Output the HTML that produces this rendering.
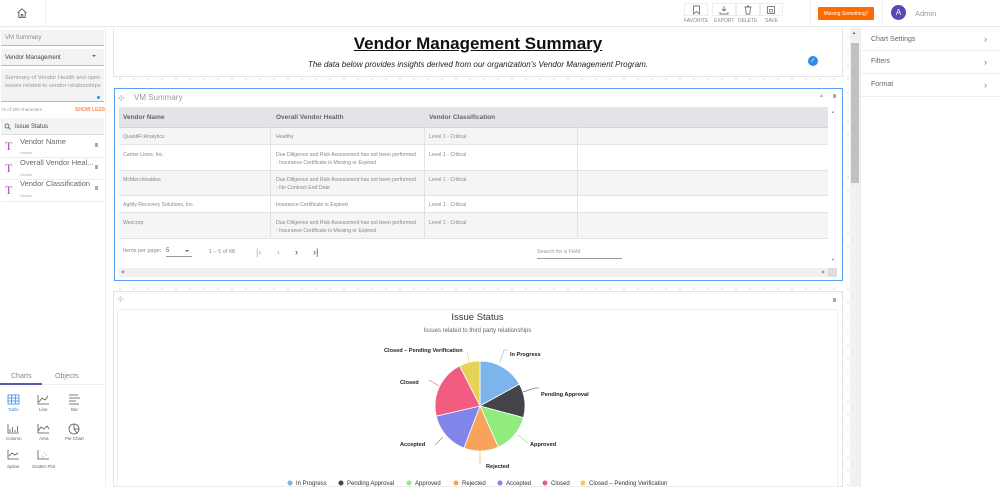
<!DOCTYPE html>
<html><head><meta charset="utf-8"><style>
*{box-sizing:border-box;margin:0;padding:0}
body{width:1000px;height:487px;overflow:hidden;background:#fff;font-family:"Liberation Sans",sans-serif;color:#555;position:relative}
.a{position:absolute}
.t{font-size:6px;color:#777;white-space:nowrap}
.grid{background-image:radial-gradient(circle,#bbb 0.6px,transparent 0.8px);background-size:14px 14px;background-position:3px 3px}
.row{position:absolute;left:119px;width:709px;border-bottom:1px solid #e3e3e3}
.cell{position:absolute;font-size:5.2px;color:#888;line-height:8px;white-space:nowrap}
</style></head><body>
<!-- top bar -->
<div class="a" style="left:0;top:0;width:1000px;height:27px;border-bottom:1px solid #e8e8e8"></div>
<div class="a" style="left:45px;top:0;width:1px;height:27px;background:#eee"></div>
<svg class="a" style="left:16px;top:7px" width="12" height="12" viewBox="0 0 12 12"><path d="M1.5 6L6 1.8 10.5 6M2.8 5v5.5h2.4V7.5h1.6v3h2.4V5" fill="none" stroke="#667" stroke-width="1"/></svg>
<div class="a" style="left:684px;top:3px;width:24px;height:13px;border:1px solid #eee"></div>
<div class="a" style="left:712px;top:3px;width:24px;height:13px;border:1px solid #eee"></div>
<div class="a" style="left:736px;top:3px;width:24px;height:13px;border:1px solid #eee"></div>
<div class="a" style="left:760px;top:3px;width:23px;height:13px;border:1px solid #eee"></div>
<svg class="a" style="left:692px;top:5px" width="9" height="10"><path d="M1.5 1h6v8L4.5 6.5 1.5 9z" fill="none" stroke="#777" stroke-width=".9"/></svg>
<svg class="a" style="left:719px;top:5px" width="10" height="10"><path d="M5 1v5M3 4l2 2 2-2M1 7v2h8V7" fill="none" stroke="#777" stroke-width=".9"/></svg>
<svg class="a" style="left:743px;top:5px" width="10" height="10"><path d="M1.5 2h7M2.5 2l.7 7h3.6l.7-7M4 1h2" fill="none" stroke="#777" stroke-width=".9"/></svg>
<svg class="a" style="left:766px;top:5px" width="10" height="10"><rect x="1.5" y="1.5" width="7" height="7" fill="none" stroke="#777" stroke-width=".9"/><rect x="3.5" y="4.5" width="3" height="2.5" fill="none" stroke="#777" stroke-width=".7"/></svg>
<div class="a t" style="left:684px;top:18px;font-size:5px;color:#888">FAVORITE</div>
<div class="a t" style="left:714px;top:18px;font-size:5px;color:#888">EXPORT</div>
<div class="a t" style="left:738px;top:18px;font-size:5px;color:#888">DELETE</div>
<div class="a t" style="left:765px;top:18px;font-size:5px;color:#888">SAVE</div>
<div class="a" style="left:810px;top:0;width:1px;height:27px;background:#eee"></div>
<div class="a" style="left:818px;top:7px;width:56px;height:13px;background:#ff6a00;border-radius:1px;color:#fff;font-size:5px;display:flex;align-items:center;justify-content:center">Missing Something?</div>
<div class="a" style="left:882px;top:0;width:1px;height:27px;background:#eee"></div>
<div class="a" style="left:891px;top:5px;width:15px;height:15px;border-radius:50%;background:#5a47b5;color:#fff;font-size:8px;line-height:15px;text-align:center">A</div>
<div class="a" style="left:915px;top:9px;font-size:7.5px;color:#999">Admin</div>

<!-- left sidebar -->
<div class="a" style="left:105px;top:27px;width:1px;height:460px;background:#eee"></div>
<div class="a" style="left:1px;top:30px;width:103px;height:16px;background:#f3f3f3;border-bottom:1px solid #bbb"></div>
<div class="a t" style="left:5px;top:35px;font-size:6px;color:#888">VM Summary</div>
<div class="a" style="left:1px;top:49px;width:103px;height:17px;background:#f3f3f3;border-bottom:1px solid #bbb"></div>
<div class="a t" style="left:5px;top:55px;font-size:6px;color:#444">Vendor Management</div>
<div class="a" style="left:92px;top:55px;border-left:2.5px solid transparent;border-right:2.5px solid transparent;border-top:2.5px solid #666"></div>
<div class="a" style="left:1px;top:69px;width:103px;height:33px;background:#f3f3f3;border-bottom:1px solid #bbb"></div>
<div class="a" style="left:5px;top:74px;font-size:5.8px;color:#999;line-height:8px;width:98px">Summary of Vendor Health and open issues related to vendor relationships</div>
<div class="a" style="left:97px;top:96px;width:3px;height:3px;border-radius:50%;background:#2196f3"></div>
<div class="a t" style="left:1px;top:107px;font-size:4.5px;color:#999">72 of 200 characters</div>
<div class="a t" style="left:75px;top:107px;font-size:5px;color:#ff8a50;font-weight:bold">SHOW LESS</div>
<div class="a" style="left:1px;top:118px;width:103px;height:17px;background:#f3f3f3;border-bottom:1px solid #ddd"></div>
<svg class="a" style="left:4px;top:123px" width="7" height="7"><circle cx="3" cy="3" r="2" fill="none" stroke="#555" stroke-width=".8"/><path d="M4.5 4.5L6.5 6.5" stroke="#555" stroke-width=".8"/></svg>
<div class="a t" style="left:15px;top:124px;font-size:6px;color:#444">Issue Status</div>
<div class="a" style="left:1px;top:157px;width:103px;height:1px;background:#eee"></div>
<div class="a" style="left:1px;top:179px;width:103px;height:1px;background:#eee"></div>
<div class="a" style="left:1px;top:201px;width:103px;height:1px;background:#eee"></div>
<div class="a" style="left:5px;top:139px;font-size:12px;color:#b04ab0;font-family:'Liberation Serif',serif">T</div>
<div class="a" style="left:5px;top:161px;font-size:12px;color:#b04ab0;font-family:'Liberation Serif',serif">T</div>
<div class="a" style="left:5px;top:183px;font-size:12px;color:#b04ab0;font-family:'Liberation Serif',serif">T</div>
<div class="a t" style="left:20px;top:137px;font-size:7.5px;color:#666">Vendor Name</div>
<div class="a t" style="left:20px;top:150px;font-size:4px;color:#aaa">Vendor</div>
<div class="a t" style="left:20px;top:158px;font-size:7.5px;color:#666">Overall Vendor Heal...</div>
<div class="a t" style="left:20px;top:172px;font-size:4px;color:#aaa">Vendor</div>
<div class="a t" style="left:20px;top:179px;font-size:7.5px;color:#666">Vendor Classification</div>
<div class="a t" style="left:20px;top:193px;font-size:4px;color:#aaa">Vendor</div>
<div class="a" style="left:95px;top:143px;width:3px;height:4px;background:#aaa"></div>
<div class="a" style="left:95px;top:165px;width:3px;height:4px;background:#aaa"></div>
<div class="a" style="left:95px;top:186px;width:3px;height:4px;background:#aaa"></div>
<!-- tabs -->
<div class="a t" style="left:11px;top:373px;font-size:7px;color:#888">Charts</div>
<div class="a t" style="left:55px;top:373px;font-size:7px;color:#888">Objects</div>
<div class="a" style="left:0;top:384px;width:104px;height:1px;background:#eee"></div>
<div class="a" style="left:0;top:383px;width:42px;height:2px;background:#5a5ab0"></div>
<svg class="a" style="left:0;top:390px" width="105" height="85" fill="none" stroke="#555" stroke-width=".8">
<rect x="8" y="5" width="11" height="9" stroke="#2d8cf0"/><path d="M8 8h11M8 11h11M11.7 5v9M15.3 5v9" stroke="#2d8cf0"/>
<path d="M38 5v9h11M39 12l3-4 3 2 3-4"/>
<path d="M69 5h9M69 8h11M69 11h7M69 14h10"/>
<path d="M8 34v9h11M10 42v-3M12.5 42v-5M15 42v-2M17.5 42v-6"/>
<path d="M38 34v9h11M38 41l3-4 3 2 3-3 2 3"/>
<circle cx="74" cy="39" r="5"/><path d="M74 34v5h5M74 39l3 4"/>
<path d="M8 60v9h11M9 66l3-3 3 2 3-2"/>
<path d="M38 60v9h11" /><path d="M41 66h.5M44 63h.5M46 65h.5M43 67h.5" stroke-width="1"/>
</svg>
<div class="a t" style="left:8px;top:407px;font-size:4.5px;color:#2d8cf0">Table</div>
<div class="a t" style="left:39px;top:407px;font-size:4.5px;color:#666">Line</div>
<div class="a t" style="left:71px;top:407px;font-size:4.5px;color:#666">Bar</div>
<div class="a t" style="left:6px;top:436px;font-size:4.5px;color:#666">Column</div>
<div class="a t" style="left:39px;top:436px;font-size:4.5px;color:#666">Area</div>
<div class="a t" style="left:65px;top:436px;font-size:4.5px;color:#666">Pie Chart</div>
<div class="a t" style="left:7px;top:464px;font-size:4.5px;color:#666">Spline</div>
<div class="a t" style="left:32px;top:464px;font-size:4.5px;color:#666">Scatter Plot</div>

<!-- canvas -->
<div class="a grid" style="left:110px;top:27px;width:740px;height:460px"></div>

<!-- header card -->
<div class="a" style="left:113px;top:28px;width:730px;height:49px;background:#fff;border:1px solid #e4e4e4;border-top:none"></div>
<div class="a" style="left:113px;top:34px;width:730px;text-align:center;font-size:17px;font-weight:bold;color:#111;text-decoration:underline">Vendor Management Summary</div>
<div class="a" style="left:113px;top:60px;width:730px;text-align:center;font-size:8px;font-style:italic;color:#222">The data below provides insights derived from our organization's Vendor Management Program.</div>
<div class="a" style="left:808px;top:56px;width:10px;height:10px;border-radius:50%;background:#2d8cf0;color:#fff;font-size:6px;line-height:10px;text-align:center">✓</div>

<!-- VM Summary card -->
<div class="a" style="left:114px;top:88px;width:729px;height:193px;background:#fff;border:1px solid #5a9ef5"></div>
<div class="a" style="left:118px;top:94px;font-size:8px;color:#bbb">✣</div>
<div class="a t" style="left:134px;top:93px;font-size:8px;color:#999">VM Summary</div>
<div class="a" style="left:819px;top:93px;font-size:5px;color:#aaa">▲</div>
<div class="a" style="left:833px;top:94px;width:3px;height:4px;background:#aaa"></div>
<div class="a" style="left:119px;top:107px;width:709px;height:21px;background:#e3e4e7;border-bottom:1px solid #d4d4d4"></div>
<div class="row" style="top:128px;height:17px;background:#f4f5f6"></div>
<div class="row" style="top:145px;height:26px"></div>
<div class="row" style="top:171px;height:25px;background:#f4f5f6"></div>
<div class="row" style="top:196px;height:17px"></div>
<div class="row" style="top:213px;height:26px;background:#f4f5f6"></div>
<div class="a" style="left:270px;top:107px;width:1px;height:132px;background:#e2e2e2"></div>
<div class="a" style="left:424px;top:107px;width:1px;height:132px;background:#e2e2e2"></div>
<div class="a" style="left:577px;top:107px;width:1px;height:132px;background:#e2e2e2"></div>
<div class="a t" style="left:123px;top:114px;font-size:6.5px;color:#666;font-weight:bold">Vendor Name</div>
<div class="a t" style="left:276px;top:114px;font-size:6.5px;color:#666;font-weight:bold">Overall Vendor Health</div>
<div class="a t" style="left:429px;top:114px;font-size:6.5px;color:#666;font-weight:bold">Vendor Classification</div>
<div class="a" style="left:829px;top:107px;width:8px;height:160px;background:#fff"></div>
<div class="a" style="left:831px;top:109px;font-size:4px;color:#999">▲</div>
<div class="a" style="left:831px;top:257px;font-size:4px;color:#999">▼</div>
<div class="cell" style="left:123px;top:133px">QuantiFi Analytics</div>
<div class="cell" style="left:276px;top:133px">Healthy</div>
<div class="cell" style="left:429px;top:133px">Level 1 - Critical</div>
<div class="cell" style="left:123px;top:151px">Carrier Lines, Inc.</div>
<div class="cell" style="left:276px;top:151px">Due Diligence and Risk Assessment has not been performed<br>- Insurance Certificate is Missing or Expired</div>
<div class="cell" style="left:429px;top:151px">Level 1 - Critical</div>
<div class="cell" style="left:123px;top:176px">McMerchinables</div>
<div class="cell" style="left:276px;top:176px">Due Diligence and Risk Assessment has not been performed<br>- No Contract End Date</div>
<div class="cell" style="left:429px;top:176px">Level 1 - Critical</div>
<div class="cell" style="left:123px;top:201px">Agility Recovery Solutions, Inc.</div>
<div class="cell" style="left:276px;top:201px">Insurance Certificate is Expired</div>
<div class="cell" style="left:429px;top:201px">Level 1 - Critical</div>
<div class="cell" style="left:123px;top:219px">Wescorp</div>
<div class="cell" style="left:276px;top:219px">Due Diligence and Risk Assessment has not been performed<br>- Insurance Certificate is Missing or Expired</div>
<div class="cell" style="left:429px;top:219px">Level 1 - Critical</div>
<div class="a t" style="left:123px;top:248px;font-size:5.5px;color:#888">Items per page:</div>
<div class="a t" style="left:166px;top:248px;font-size:6px;color:#555">5</div>
<div class="a" style="left:166px;top:256px;width:26px;height:1px;background:#999"></div>
<div class="a" style="left:185px;top:250px;border-left:2.5px solid transparent;border-right:2.5px solid transparent;border-top:2.5px solid #666"></div>
<div class="a t" style="left:209px;top:249px;font-size:5.5px;color:#888">1 – 5 of 68</div>
<div class="a t" style="left:256px;top:247px;font-size:9px;color:#aaa">|‹</div>
<div class="a t" style="left:277px;top:247px;font-size:9px;color:#aaa">‹</div>
<div class="a t" style="left:295px;top:247px;font-size:9px;color:#444">›</div>
<div class="a t" style="left:313px;top:247px;font-size:9px;color:#444">›|</div>
<div class="a t" style="left:537px;top:249px;font-size:5.5px;color:#999">Search for a Field</div>
<div class="a" style="left:537px;top:258px;width:85px;height:1px;background:#999"></div>
<div class="a" style="left:119px;top:268px;width:709px;height:9px;background:#f0f0f0"></div>
<div class="a" style="left:828px;top:268px;width:9px;height:9px;background:#ddd"></div>
<div class="a" style="left:121px;top:269px;font-size:4px;color:#888">◀</div>
<div class="a" style="left:822px;top:269px;font-size:4px;color:#888">▶</div>

<!-- chart card -->
<div class="a" style="left:113px;top:291px;width:730px;height:196px;background:#fff;border:1px solid #e2e2ea"></div>
<div class="a" style="left:117px;top:295px;font-size:8px;color:#ccc">✣</div>
<div class="a" style="left:833px;top:298px;width:3px;height:4px;background:#aaa"></div>
<div class="a" style="left:117px;top:309px;width:721px;height:178px;border:1px solid #eee"></div>
<div class="a" style="left:117px;top:312px;width:721px;text-align:center;font-size:9.5px;color:#333">Issue Status</div>
<div class="a" style="left:117px;top:328px;width:721px;text-align:center;font-size:6px;color:#666">Issues related to third party relationships</div>
<svg class="a" style="left:0;top:0" width="1000" height="487">
<g stroke="#fff" stroke-width=".8">
<path d="M480 406L480 361A45 45 0 0 1 519.4 384.2Z" fill="#7cb5ec"/>
<path d="M480 406L519.4 384.2A45 45 0 0 1 523.5 417.6Z" fill="#434348"/>
<path d="M480 406L523.5 417.6A45 45 0 0 1 498.3 447.1Z" fill="#90ed7d"/>
<path d="M480 406L498.3 447.1A45 45 0 0 1 463.9 448Z" fill="#f7a35c"/>
<path d="M480 406L463.9 448A45 45 0 0 1 436.2 416.1Z" fill="#8085e9"/>
<path d="M480 406L436.2 416.1A45 45 0 0 1 459.6 365.9Z" fill="#f15c80"/>
<path d="M480 406L459.6 365.9A45 45 0 0 1 480 361Z" fill="#e4d354"/>
</g>
<g fill="none" stroke-width=".6">
<path d="M500 362l4-12h4" stroke="#7cb5ec"/>
<path d="M523 392l12-4h4" stroke="#434348"/>
<path d="M518 435l10 8" stroke="#90ed7d"/>
<path d="M480 450v14" stroke="#f7a35c"/>
<path d="M443 437l-8 8" stroke="#8085e9"/>
<path d="M439 386l-10-6" stroke="#f15c80"/>
<path d="M469 363l-2-12" stroke="#e4d354"/>
</g>
<g font-family="Liberation Sans,sans-serif" font-size="5.6" font-weight="bold" fill="#222">
<text x="510" y="356">In Progress</text>
<text x="541" y="396">Pending Approval</text>
<text x="530" y="446">Approved</text>
<text x="486" y="468">Rejected</text>
<text x="400" y="446">Accepted</text>
<text x="400" y="384">Closed</text>
<text x="384" y="352">Closed – Pending Verification</text>
</g>
<g font-family="Liberation Sans,sans-serif" font-size="6" fill="#333">
<circle cx="290" cy="483" r="2.5" fill="#7cb5ec"/><text x="296" y="485">In Progress</text>
<circle cx="341" cy="483" r="2.5" fill="#434348"/><text x="347" y="485">Pending Approval</text>
<circle cx="409" cy="483" r="2.5" fill="#90ed7d"/><text x="415" y="485">Approved</text>
<circle cx="456" cy="483" r="2.5" fill="#f7a35c"/><text x="462" y="485">Rejected</text>
<circle cx="500" cy="483" r="2.5" fill="#8085e9"/><text x="506" y="485">Accepted</text>
<circle cx="545" cy="483" r="2.5" fill="#f15c80"/><text x="551" y="485">Closed</text>
<circle cx="583" cy="483" r="2.5" fill="#e4d354"/><text x="589" y="485">Closed – Pending Verification</text>
</g>
</svg>

<!-- main scrollbar -->
<div class="a" style="left:850px;top:28px;width:10px;height:459px;background:#f1f1f1"></div>
<div class="a" style="left:851px;top:43px;width:8px;height:140px;background:#c1c1c1"></div>
<div class="a" style="left:852px;top:30px;font-size:4px;color:#555">▲</div>

<!-- right panel -->
<div class="a" style="left:860px;top:27px;width:1px;height:460px;background:#eee"></div>
<div class="a t" style="left:871px;top:36px;font-size:7px;color:#666">Chart Settings</div>
<div class="a t" style="left:871px;top:58px;font-size:7px;color:#666">Filters</div>
<div class="a t" style="left:871px;top:81px;font-size:7px;color:#666">Format</div>
<div class="a t" style="left:984px;top:34px;font-size:9px;color:#777">›</div>
<div class="a t" style="left:984px;top:57px;font-size:9px;color:#777">›</div>
<div class="a t" style="left:984px;top:80px;font-size:9px;color:#777">›</div>
<div class="a" style="left:861px;top:50px;width:139px;height:1px;background:#eee"></div>
<div class="a" style="left:861px;top:73px;width:139px;height:1px;background:#eee"></div>
<div class="a" style="left:861px;top:96px;width:139px;height:1px;background:#eee"></div>
</body></html>
